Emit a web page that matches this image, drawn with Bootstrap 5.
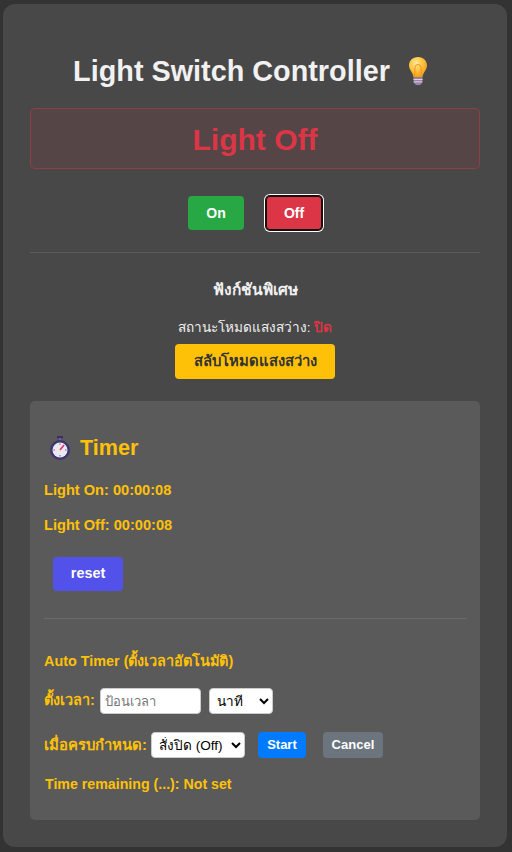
<!DOCTYPE html>
<html lang="en">
<head>
    <meta charset="UTF-8">
    <meta name="viewport" content="width=device-width, initial-scale=1.0">
    <title>Light Switch Controller</title>

    <link href="https://cdn.jsdelivr.net/npm/bootstrap@5.3.3/dist/css/bootstrap.min.css" rel="stylesheet">
    <script src="https://cdn.jsdelivr.net/npm/bootstrap@5.3.3/dist/js/bootstrap.bundle.min.js"></script>

    <style>
        body {
            font-family: "Liberation Sans", "Noto Sans", sans-serif;
            background-color: #333;
            color: #f1f1f1;
            padding: 4px 5px 5px 3px;
            min-height: 852px;
        }
        .panel-main {
            background: #484848;
            border-radius: 12px;
            padding: 44px 27px 27px;
            height: 843px;
        }
        .main-title {
            font-size: 28.8px;
            font-weight: 700;
            line-height: 46px;
            margin: 0 0 14px;
            text-align: center;
        }
        .title-bulb {
            margin: 8px 6px 0 7px;
            vertical-align: top;
        }
        .state-box {
            height: 61px;
            border: 1px solid rgba(220, 53, 69, .4);
            background: rgba(220, 53, 69, .1);
            border-radius: 5px;
            color: #dc3545;
            font-size: 30px;
            font-weight: 700;
            line-height: 61px;
            text-align: center;
        }
        .switch-row {
            gap: 21px;
            margin: 27px 0 22px;
        }
        .btn-switch {
            width: 56px;
            height: 34px;
            padding: 0;
            border: 0;
            border-radius: 4px;
            color: #fff;
            font-size: 14px;
            font-weight: 700;
        }
        .btn-on { background: #28a745; }
        .btn-off {
            background: #dc3545;
            box-shadow: inset 0 0 0 1px #111, 0 0 0 1px #111, 0 0 0 2px #fff;
            margin-left: 1px;
        }
        .rule-line {
            border: 0;
            border-top: 1px solid #5c5c5c;
            opacity: 1;
            margin: 0;
        }
        .timer-panel .rule-line { border-top-color: #6b6b6b; }
        .special-title {
            font-size: 15.5px;
            font-weight: 700;
            margin: 27px 0 18px;
            line-height: 20px;
            text-align: center;
        }
        .mode-line {
            font-size: 13.6px;
            line-height: 20px;
            margin: 0 0 6px;
            text-align: center;
        }
        .text-off { color: #dc3545; font-weight: 700; }
        .btn-mode {
            display: block;
            width: 160px;
            height: 35px;
            margin: 0 auto 22px;
            padding: 0;
            border: 0;
            border-radius: 4px;
            background: #ffc107;
            color: #333;
            font-size: 14.8px;
            font-weight: 700;
        }
        .timer-panel {
            background: #5a5a5a;
            border-radius: 5px;
            padding: 29px 13px 0 14px;
            height: 419px;
            color: #ffc107;
            font-size: 14.4px;
            font-weight: 700;
        }
        .timer-title {
            font-size: 21.6px;
            font-weight: 700;
            line-height: 36px;
            margin: 0 0 14px;
            color: #ffc107;
        }
        .timer-line {
            font-size: 14.6px;
            line-height: 20px;
            margin: 0 0 15px;
        }
        .btn-reset {
            display: block;
            width: 70px;
            height: 34px;
            margin: 22px 0 27px 9px;
            padding: 0;
            border: 0;
            border-radius: 4px;
            background: #5252eb;
            color: #fff;
            font-size: 14.4px;
            font-weight: 700;
        }
        .auto-title {
            line-height: 20px;
            margin: 32px 0 17px;
        }
        .form-line {
            height: 26px;
            margin-bottom: 18px;
        }
        .form-line.last-line { margin-bottom: 16px; }
        .label-wide { font-size: 14.8px; }
        .field-text {
            width: 101px;
            height: 26px;
            border: 1px solid #ccc;
            border-radius: 4px;
            padding: 0 4px;
            font-size: 13px;
            font-weight: 400;
            font-family: inherit;
            background: #fff;
            margin-left: 5px;
        }
        .field-text::placeholder { color: #777; }
        .field-select {
            height: 26px;
            border: 1px solid #ccc;
            border-radius: 4px;
            font-size: 13.6px;
            font-family: inherit;
            background: #fff;
            color: #000;
            padding: 0 3px;
        }
        .select-unit { width: 64px; }
        .select-action { width: 94px; }
        .btn-small {
            height: 26px;
            padding: 0;
            border: 0;
            border-radius: 4px;
            color: #fff;
            font-size: 13px;
            font-weight: 700;
        }
        .btn-start { background: #007bff; width: 48px; margin-left: 13px; }
        .btn-cancel { background: #6c757d; width: 60px; margin-left: 17px; }
        .remain-line {
            font-size: 14.2px;
            margin: 0 0 0 1px;
            line-height: 20px;
        }
    </style>
</head>
<body>
    <div class="panel-main">
        <h1 class="main-title">Light Switch Controller
            <svg width="26" height="30" viewBox="0 0 26 30" class="title-bulb">
                <defs>
                    <radialGradient id="glow" cx="40%" cy="30%" r="70%">
                        <stop offset="0" stop-color="#ffe9a0"/>
                        <stop offset=".5" stop-color="#ffc53d"/>
                        <stop offset="1" stop-color="#f59a1e"/>
                    </radialGradient>
                </defs>
                <path d="M13 1C7.500 1 4 5 4 9.500c0 4.500 4 6.500 4.500 12h9C18 16 22 14 22 9.500 22 5 18.500 1 13 1z" fill="url(#glow)"/>
                <path d="M9.500 21 10 11.500a3 3 0 1 1 6 0L16.500 21" fill="none" stroke="#e8952a" stroke-width="1"/>
                <path d="M8.500 21.500h9v5l-2.500 2.500h-4l-2.500-2.500z" fill="#9a82a8"/>
                <path d="M8.500 23.500h9M9 25.800h8" stroke="#d9d0de" stroke-width="1"/>
            </svg>
        </h1>
        <div class="state-box">Light Off</div>
        <div class="d-flex justify-content-center switch-row">
            <button class="btn-switch btn-on">On</button>
            <button class="btn-switch btn-off">Off</button>
        </div>
        <hr class="rule-line">
        <p class="special-title">ฟังก์ชันพิเศษ</p>
        <p class="mode-line">สถานะโหมดแสงสว่าง: <span class="text-off">ปิด</span></p>
        <button class="btn-mode">สลับโหมดแสงสว่าง</button>

        <div class="timer-panel">
            <h2 class="timer-title d-flex align-items-center">
                <svg width="24" height="26" viewBox="0 0 24 26" class="me-2 ms-1">
                    <rect x="9" y="1" width="6" height="2.500" fill="#3d2f66"/>
                    <rect x="11" y="3" width="2" height="3" fill="#6d6486"/>
                    <circle cx="12" cy="15" r="10" fill="#3f3570"/>
                    <circle cx="12" cy="15" r="7.500" fill="#ece8f0"/>
                    <path d="M12 15l4-5" stroke="#e0306a" stroke-width="1.600"/>
                    <path d="M12 8.500v1.500M12 20v1.500M5.500 15H7M17 15h1.500" stroke="#6d6486" stroke-width="1"/>
                </svg>
                Timer
            </h2>
            <p class="timer-line">Light On: 00:00:08</p>
            <p class="timer-line">Light Off: 00:00:08</p>
            <button class="btn-reset">reset</button>
            <hr class="rule-line">
            <p class="auto-title">Auto Timer (ตั้งเวลาอัตโนมัติ)</p>
            <div class="form-line d-flex align-items-center">
                <span>ตั้งเวลา:</span>
                <input class="field-text" type="text" placeholder="ป้อนเวลา">
                <select class="field-select select-unit ms-2"><option>นาที</option></select>
            </div>
            <div class="form-line last-line d-flex align-items-center">
                <span class="label-wide">เมื่อครบกำหนด:</span>
                <select class="field-select select-action ms-1"><option>สั่งปิด (Off)</option></select>
                <button class="btn-small btn-start">Start</button>
                <button class="btn-small btn-cancel">Cancel</button>
            </div>
            <p class="remain-line">Time remaining (...): Not set</p>
        </div>
    </div>
</body>
</html>
